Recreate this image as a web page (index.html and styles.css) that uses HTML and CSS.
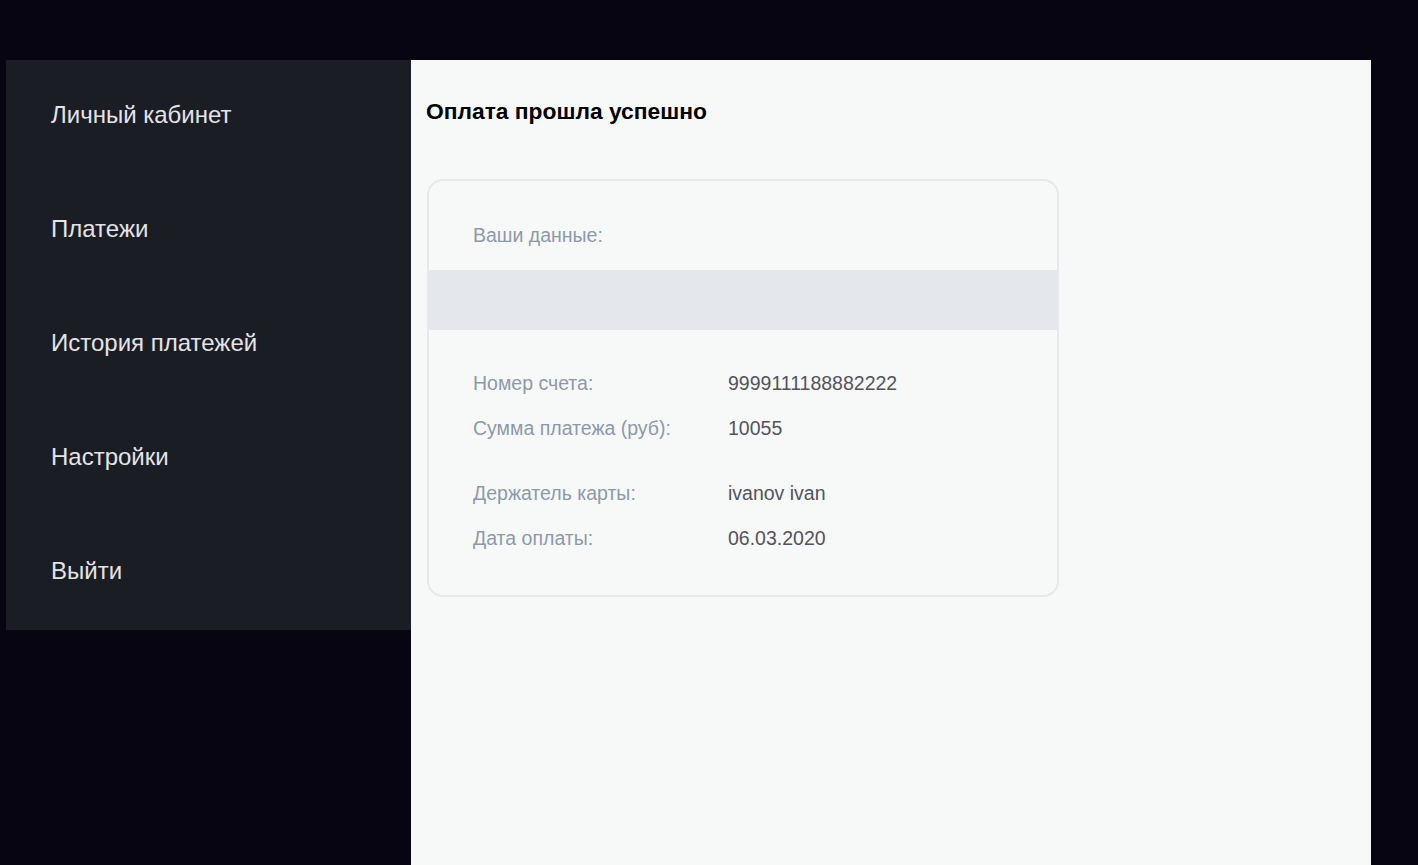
FILE: index.html
```html
<!DOCTYPE html>
<html lang="ru">
<head>
<meta charset="utf-8">
<title>Оплата прошла успешно</title>
<link rel="stylesheet" href="styles.css">
</head>
<body>
<div class="layout">
  <nav class="sidebar">
    <a class="nav-item" href="#">Личный кабинет</a>
    <a class="nav-item" href="#">Платежи</a>
    <a class="nav-item" href="#">История платежей</a>
    <a class="nav-item" href="#">Настройки</a>
    <a class="nav-item" href="#">Выйти</a>
  </nav>
  <main class="main">
    <h1 class="title">Оплата прошла успешно</h1>
    <section class="card">
      <div class="card-head">Ваши данные:</div>
      <div class="band"></div>
      <div class="card-body">
        <div class="group">
          <div class="row"><span class="label">Номер счета:</span><span class="value">9999111188882222</span></div>
          <div class="row"><span class="label">Сумма платежа (руб):</span><span class="value">10055</span></div>
        </div>
        <div class="group">
          <div class="row"><span class="label">Держатель карты:</span><span class="value">ivanov ivan</span></div>
          <div class="row"><span class="label">Дата оплаты:</span><span class="value">06.03.2020</span></div>
        </div>
      </div>
    </section>
  </main>
</div>
</body>
</html>
```
FILE: styles.css
```css
html, body {
  margin: 0;
  padding: 0;
  background: #070511;
  font-family: "Liberation Sans", Arial, sans-serif;
}
.layout {
  display: flex;
  align-items: flex-start;
  padding: 60px 0 0 6px;
  min-height: 805px;
}
.sidebar {
  width: 405px;
  background: #1b1d25;
  display: flex;
  flex-direction: column;
}
.nav-item {
  display: flex;
  align-items: center;
  box-sizing: border-box;
  height: 114px;
  padding: 0 0 4px 45px;
  color: #e4e4e8;
  font-size: 24px;
  text-decoration: none;
}
.main {
  width: 960px;
  min-height: 805px;
  background: #f7f9f9;
  padding: 0 0 0 15px;
  box-sizing: border-box;
}
.title {
  margin: 0;
  padding-top: 37px;
  line-height: 28px;
  height: 82px;
  font-size: 22.8px;
  font-weight: bold;
  color: #000;
}
.card {
  width: 632px;
  box-sizing: border-box;
  border: 2px solid #e5e8ec;
  border-radius: 16px;
  margin-left: 1px;
  overflow: hidden;
}
.card-head {
  padding: 40px 0 21px 44px;
  line-height: 28px;
  font-size: 19.5px;
  color: #8d99aa;
}
.band {
  height: 60px;
  background: #e4e8ec;
}
.card-body {
  padding: 31px 0 34px 44px;
  display: flex;
  flex-direction: column;
  gap: 20px;
}
.row {
  display: flex;
  height: 45px;
  align-items: center;
  font-size: 19.5px;
}
.label {
  width: 255px;
  color: #8d99aa;
}
.value {
  color: #53535d;
}
```
